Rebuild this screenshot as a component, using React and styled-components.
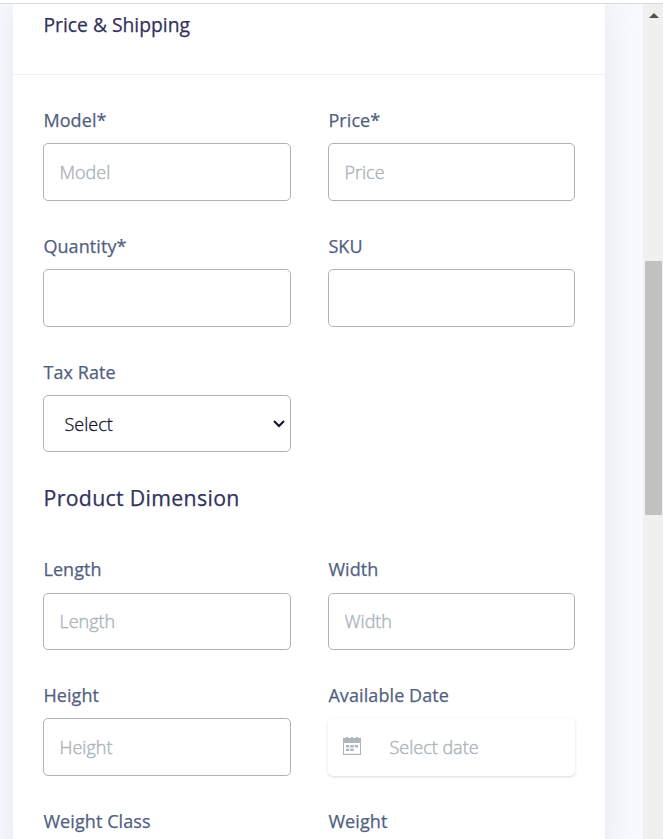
import React from "react";
import styled, { createGlobalStyle } from "styled-components";

const GlobalStyle = createGlobalStyle`
  *, *::before, *::after { box-sizing: border-box; }
  body {
    margin: 0;
    overflow: hidden;
    font-family: "Open Sans", "Noto Sans", sans-serif;
    color: #525f7f;
    background: #fff;
  }
  input, select { font-family: inherit; }
`;

const Page = styled.div`
  height: 839px;
  display: flex;
  border-top: 1px solid #d9dadf;
  margin-top: 3px;
  overflow: hidden;
`;

const Content = styled.main`
  flex: 1;
  padding: 0 38px 0 13px;
  background: #f7f9fe;
  overflow: hidden;
`;

const Card = styled.section`
  width: 592px;
  height: 860px;
  background: #fff;
  box-shadow: 0 0 32px rgba(136, 145, 165, 0.16);
`;

const CardHeader = styled.header`
  height: 71px;
  padding: 6px 30px 0 30.5px;
  border-bottom: 1px solid #eff0f2;
`;

const CardTitle = styled.h3`
  margin: 0;
  font-size: ${(p) => p.$size}px;
  line-height: 30px;
  font-weight: 500;
  letter-spacing: ${(p) => p.$tracking || 0}px;
  color: #32325d;
  -webkit-text-stroke: 0.25px currentColor;
`;

const CardBody = styled.div`
  padding: 32px 30px;
`;

const SectionTitle = styled(CardTitle)`
  margin: 31px 0 43px;
  padding-left: 0.5px;
`;

const FieldGrid = styled.div`
  display: grid;
  grid-template-columns: 248px 247px;
  column-gap: 37px;
  row-gap: 32px;
`;

const Field = styled.label`
  display: flex;
  flex-direction: column;
`;

const LabelText = styled.span`
  height: 27px;
  margin-bottom: ${(p) => p.$space || 9}px;
  padding-left: 0.4px;
  font-size: 18px;
  line-height: 27px;
  font-weight: 500;
  letter-spacing: 0.09px;
  color: #525f7f;
  -webkit-text-stroke: 0.25px currentColor;
`;

const TextInput = styled.input`
  width: 100%;
  height: ${(p) => p.$height || 58}px;
  padding: 0 15.5px ${(p) => (p.$height === 57 ? 1 : 0)}px;
  border: 1px solid #b0b2b5;
  border-radius: 5px;
  background: #fff;
  color: #8898aa;
  font-size: 18px;
  font-weight: 300;
  outline: none;
  &::placeholder {
    color: #adb5bd;
    opacity: 1;
    -webkit-text-stroke: 0.45px #adb5bd;
  }
`;

const SelectBox = styled.div`
  display: flex;
  align-items: center;
  height: 57px;
  padding-right: 4px;
  border: 1px solid #b0b2b5;
  border-radius: 5px;
`;

const Select = styled.select`
  flex: 1;
  height: 100%;
  padding: 0 20.5px;
  border: 0;
  appearance: none;
  background: transparent;
  color: #11112e;
  font-size: 18px;
  font-weight: 300;
  outline: none;
  -webkit-text-stroke: 0.3px currentColor;
`;

const DateBox = styled.div`
  display: flex;
  align-items: center;
  height: 58px;
  padding-left: 15px;
  border-radius: 5px;
  background: #fff;
  box-shadow: 0 1px 3px rgba(50, 50, 93, 0.15), 0 1px 0 rgba(0, 0, 0, 0.02);
`;

const DateInput = styled(TextInput)`
  width: auto;
  flex: 1;
  min-width: 0;
  height: 100%;
  margin-left: 13px;
  border: 0;
  background: transparent;
`;

const ScrollTrack = styled.aside`
  flex: none;
  width: 20px;
  padding: 9px 1px 0 2px;
  background: #f0f0f0;
`;

const ScrollArrow = styled.svg`
  display: block;
  margin: 0 0 0 4px;
`;

const ScrollThumb = styled.div`
  height: 254px;
  margin-top: 243px;
  background: #c1c1c1;
`;

const CalendarSvg = styled.svg`
  flex: none;
  margin-bottom: 2px;
`;

function ChevronIcon() {
  return (
    <svg width="14" height="10" viewBox="0 0 14 10" fill="none" stroke="#11112e" strokeWidth="2">
      <path d="M2 2l5 5 5-5" />
    </svg>
  );
}

function CalendarIcon() {
  return (
    <CalendarSvg width="18" height="18" viewBox="0 0 18 18" fill="#adb5bd">
      <path
        fillRule="evenodd"
        d="M0 1h3V0h2v1h3V0h2v1h3V0h2v1h3v17H0zM1 6v10.7h16V6z"
      />
      <path d="M3 8h3.2v2.5H3zM7.2 8h3.6v2.5H7.2zM11.8 8H15v2.5h-3.2zM3 11.8h3.2V14H3zM7.2 11.8h3.6V14H7.2z" />
    </CalendarSvg>
  );
}

function TextField({ label, placeholder, height, space }) {
  return (
    <Field>
      <LabelText $space={space}>{label}</LabelText>
      <TextInput placeholder={placeholder} $height={height} />
    </Field>
  );
}

export default function App() {
  return (
    <>
      <GlobalStyle />
      <Page>
        <Content>
          <Card>
            <CardHeader>
              <CardTitle $size={19.3}>Price &amp; Shipping</CardTitle>
            </CardHeader>
            <CardBody>
              <FieldGrid>
                <TextField label="Model*" placeholder="Model" />
                <TextField label="Price*" placeholder="Price" />
                <TextField label="Quantity*" />
                <TextField label="SKU" />
                <Field>
                  <LabelText>Tax Rate</LabelText>
                  <SelectBox>
                    <Select defaultValue="Select">
                      <option>Select</option>
                    </Select>
                    <ChevronIcon />
                  </SelectBox>
                </Field>
              </FieldGrid>
              <SectionTitle $size={21.3} $tracking={0.32}>Product Dimension</SectionTitle>
              <FieldGrid>
                <TextField label="Length" placeholder="Length" height={57} space={10} />
                <TextField label="Width" placeholder="Width" height={57} space={10} />
                <TextField label="Height" placeholder="Height" />
                <Field>
                  <LabelText>Available Date</LabelText>
                  <DateBox>
                    <CalendarIcon />
                    <DateInput placeholder="Select date" />
                  </DateBox>
                </Field>
                <TextField label="Weight Class" />
                <TextField label="Weight" />
              </FieldGrid>
            </CardBody>
          </Card>
        </Content>
        <ScrollTrack>
          <ScrollArrow width="10" height="5" viewBox="0 0 10 5">
            <path d="M0 5l5-5 5 5z" fill="#505050" />
          </ScrollArrow>
          <ScrollThumb />
        </ScrollTrack>
      </Page>
    </>
  );
}
